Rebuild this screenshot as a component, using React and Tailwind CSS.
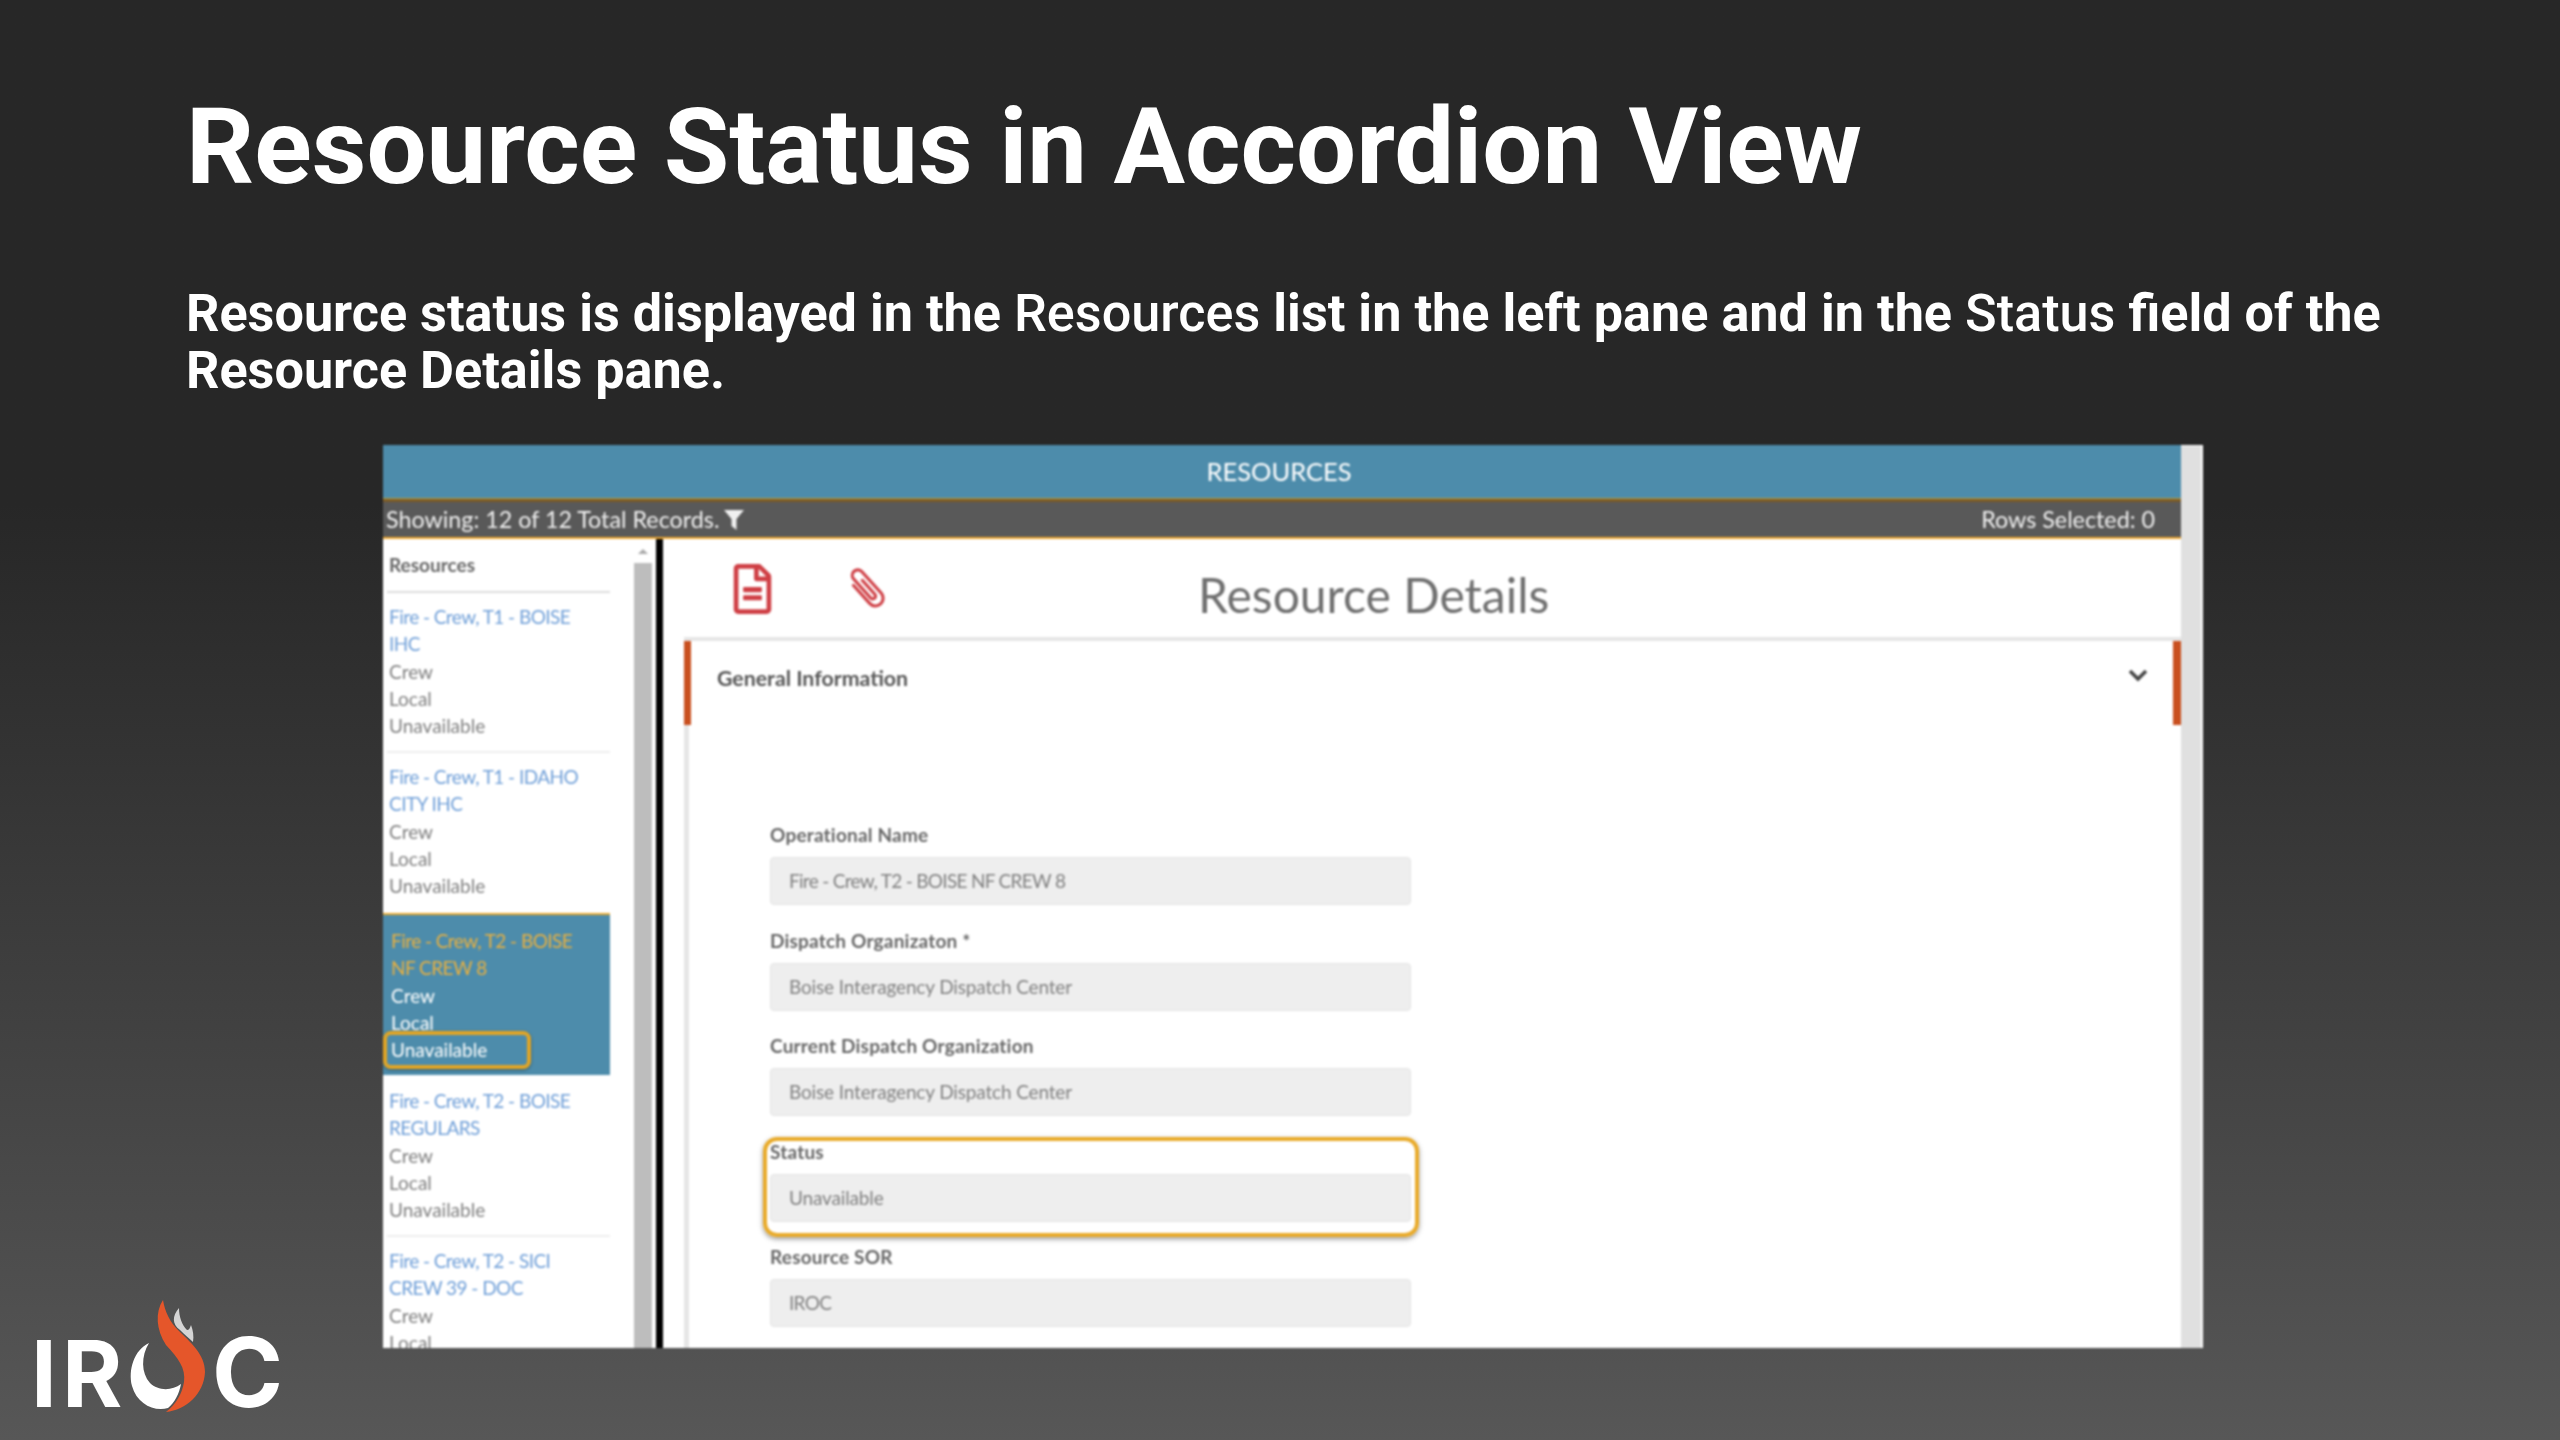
import React from "react";
import { FaRegFileAlt } from "react-icons/fa";

const resources = [
  { title: ["Fire - Crew, T1 - BOISE", "IHC"] },
  { title: ["Fire - Crew, T1 - IDAHO", "CITY IHC"] },
  { title: ["Fire - Crew, T2 - BOISE", "NF CREW 8"], selected: true },
  { title: ["Fire - Crew, T2 - BOISE", "REGULARS"] },
  { title: ["Fire - Crew, T2 - SICI", "CREW 39 - DOC"] },
];

const fields = [
  { label: "Operational Name", value: "Fire - Crew, T2 - BOISE NF CREW 8", caps: true },
  { label: "Dispatch Organizaton *", value: "Boise Interagency Dispatch Center" },
  { label: "Current Dispatch Organization", value: "Boise Interagency Dispatch Center" },
  { label: "Status", value: "Unavailable", highlight: true },
  { label: "Resource SOR", value: "IROC", caps: true },
];

function ResourceItem({ item }) {
  if (item.selected) {
    return (
      <div className="w-[227px] h-[162px] mb-[2px] pt-[12px] pl-[8px] bg-[#4d8cab] border-t-2 border-[#e8a92e] text-white">
        <p className="text-[#e8b040] tracking-[-0.55px]">{item.title[0]}</p>
        <p className="text-[#e8b040] tracking-[-0.55px]">{item.title[1]}</p>
        <p>Crew</p>
        <p>Local</p>
        <div className="relative">
          <p>Unavailable</p>
          {/* yellow callout round the status */}
          <div className="absolute left-[-8px] top-[-5px] w-[148px] h-[38px] border-[4px] border-[#e0a526] rounded-[8px] shadow-[0_1px_3px_rgba(0,0,0,0.4)]"></div>
        </div>
      </div>
    );
  }
  return (
    <div className="w-[227px] h-[160px] pt-[10px] pl-[6px] text-[#808080]">
      <p className="text-[#6f9fd8] tracking-[-0.55px]">{item.title[0]}</p>
      <p className="text-[#6f9fd8] tracking-[-0.55px]">{item.title[1]}</p>
      <p>Crew</p>
      <p>Local</p>
      <p>Unavailable</p>
    </div>
  );
}

function ResourceList() {
  return (
    <div className="w-[251px] shrink-0 overflow-hidden text-[19px] leading-[27.3px]">
      <p className="h-[52px] pt-[12px] pl-[6px] font-bold text-[19px] text-[#666666]">Resources</p>
      <div className="ml-[4px] w-[223px] h-[2px] bg-[#dddddd]"></div>
      <ResourceItem item={resources[0]} />
      <div className="ml-[4px] w-[223px] h-[2px] bg-[#eeeeee] -mt-[2px]"></div>
      <ResourceItem item={resources[1]} />
      <ResourceItem item={resources[2]} />
      <ResourceItem item={resources[3]} />
      <div className="ml-[4px] w-[223px] h-[2px] bg-[#eeeeee] -mt-[2px]"></div>
      <ResourceItem item={resources[4]} />
    </div>
  );
}

function Field({ field }) {
  return (
    <div className="relative w-[641px] mb-[13.5px]">
      <p className="h-[44px] leading-[44px] text-[19px] font-bold text-[#666666] tracking-[0.2px]">{field.label}</p>
      <div className={`h-[48px] leading-[46px] pl-[18px] text-[19px] text-[#808080] bg-[#eeeeee] border border-[#e4e4e4] rounded-[4px] ${field.caps ? "tracking-[-0.7px]" : "tracking-[-0.15px]"}`}>
        {field.value}
      </div>
      {field.highlight && (
        <div className="absolute left-[-7px] right-[-8px] top-[7px] h-[100px] border-[4px] border-[#e9ab2b] rounded-[14px] shadow-[0_2px_5px_rgba(0,0,0,0.4)]"></div>
      )}
    </div>
  );
}

function DetailsPane() {
  return (
    <div className="flex-1 min-w-0 overflow-hidden">
      <div className="h-[98px] flex items-center pl-[69px] pt-[4px]">
        <FaRegFileAlt className="w-[41px] h-[50px] text-[#cf3f45] -mt-[2px]" />
        <svg className="ml-[74px] w-[42px] h-[50px]" viewBox="0 0 38 44" fill="none" stroke="#cf3f45" strokeWidth="2.800" strokeLinecap="round">
          <g transform="rotate(-42 19 22)">
            <path d="M12 10 V32 A7 7 0 0 0 26 32 V6 A5 5 0 0 0 16 6 V29 A2.500 2.500 0 0 0 21 29 V12" />
          </g>
        </svg>
        <p className="ml-[309px] mt-[10px] text-[48px] leading-none text-[#707070]">Resource Details</p>
      </div>
      <div className="ml-[21px] h-[800px] border-l-[5px] border-t-[4px] border-[#e6e6e6]">
        <div className="flex items-start h-[84px] border-r-[8px] border-[#c9501f] relative">
          <div className="absolute left-[-5px] top-0 w-[7px] h-full bg-[#c9501f]"></div>
          <p className="ml-[28px] mt-[23px] text-[21.300px] leading-[28px] font-bold text-[#555555]">General Information</p>
          <svg className="ml-auto mr-[25px] mt-[27px] w-[20px] h-[14px]" viewBox="0 0 20 14" fill="none" stroke="#444444" strokeWidth="3.500">
            <path d="M2 3 L10 11 L18 3" />
          </svg>
        </div>
        <div className="pl-[81px] pt-[88px]">
          {fields.map((f) => (
            <Field key={f.label} field={f} />
          ))}
        </div>
      </div>
    </div>
  );
}

function Logo() {
  return (
    <svg className="absolute left-0 bottom-0 w-[320px] h-[180px]" viewBox="0 1260 320 180">
      <g fill="#ffffff" fontFamily="Inter, sans-serif" fontWeight="700" fontSize="92">
        <text x="31" y="1407">I</text>
        <text x="62" y="1407">R</text>
        <text x="212" y="1407" fontSize="96">C</text>
      </g>
      <path d="M149 1343 C134 1350 128 1370 132 1386 C137 1404 154 1412 168 1408 C175 1402 179 1394 181 1384 C172 1391 158 1391 150 1383 C141 1373 141 1356 149 1343 Z" fill="#ffffff" />
      <path d="M163 1300 C155 1312 156 1330 166 1345 C178 1358 186 1368 184 1382 C182 1394 176 1404 166 1412 C186 1410 204 1394 205 1372 C205 1354 190 1342 178 1330 C170 1322 165 1312 163 1300 Z" fill="#e5562a" />
      <path d="M179 1308 C172 1316 172 1324 180 1330 C185 1335 189 1338 193 1342 C194 1336 193 1330 191 1325 C190 1328 189 1330 187 1330 C182 1325 179 1317 179 1308 Z" fill="#d4d4d4" />
    </svg>
  );
}

export default function App() {
  return (
    <div className="relative h-[1440px] w-[2560px] overflow-hidden bg-gradient-to-b from-[#272727] from-[35%] to-[#575757] text-white font-['Roboto',sans-serif]">
      <div className="pl-[186px] pt-[87px]">
        <h1 className="text-[106.500px] leading-[120px] font-bold">Resource Status in Accordion View</h1>
        <p className="mt-[78px] w-[2260px] text-[52.200px] leading-[57px] font-bold">
          Resource status is displayed in the <span className="font-medium">Resources</span> list in the left pane and in the <span className="font-medium">Status</span> field of the Resource Details pane.
        </p>
      </div>

      <div className="ml-[383px] mt-[46px] w-[1820px] h-[903px] flex bg-white overflow-hidden font-['Lato',sans-serif] blur-[0.8px]">
        <div className="flex-1 min-w-0 flex flex-col">
          <div className="h-[53px] shrink-0 flex items-center justify-center pr-[6px] bg-[#4d8cab] text-[25.500px] text-white">RESOURCES</div>
          <div className="h-[4px] shrink-0 bg-[#7a5a28] border-t border-[#b8a040]"></div>
          <div className="h-[37px] shrink-0 flex items-center justify-between pl-[3px] pr-[26px] bg-[#595959] border-b-[2px] border-[#f0a830] text-[23.300px] text-[#f0f0f0]">
            <div className="flex items-center gap-[5px]">
              <span>Showing: 12 of 12 Total Records.</span>
              <svg className="w-[20px] h-[22px]" viewBox="0 0 20 22" fill="#f0f0f0">
                <path d="M0 1 H20 L12.500 10 V21 L7.500 17 V10 Z" />
              </svg>
            </div>
            <span>Rows Selected: 0</span>
          </div>
          <div className="flex-1 min-h-0 flex text-[#666666]">
            <ResourceList />
            <div className="w-[18px] shrink-0 flex flex-col">
              <div className="h-[24px] shrink-0 flex items-center justify-center">
                <div className="w-0 h-0 border-x-[5px] border-x-transparent border-b-[5px] border-b-[#aaaaaa]"></div>
              </div>
              <div className="flex-1 bg-[#bdbdbd]"></div>
            </div>
            <div className="w-[4px] shrink-0"></div>
            <div className="w-[7px] shrink-0 bg-black"></div>
            <DetailsPane />
          </div>
        </div>
        {/* grey gutter on the right of the frame */}
        <div className="w-[20px] shrink-0 mr-[2px] mt-[1px] bg-[#e0e0e0]"></div>
      </div>

      <Logo />
    </div>
  );
}
